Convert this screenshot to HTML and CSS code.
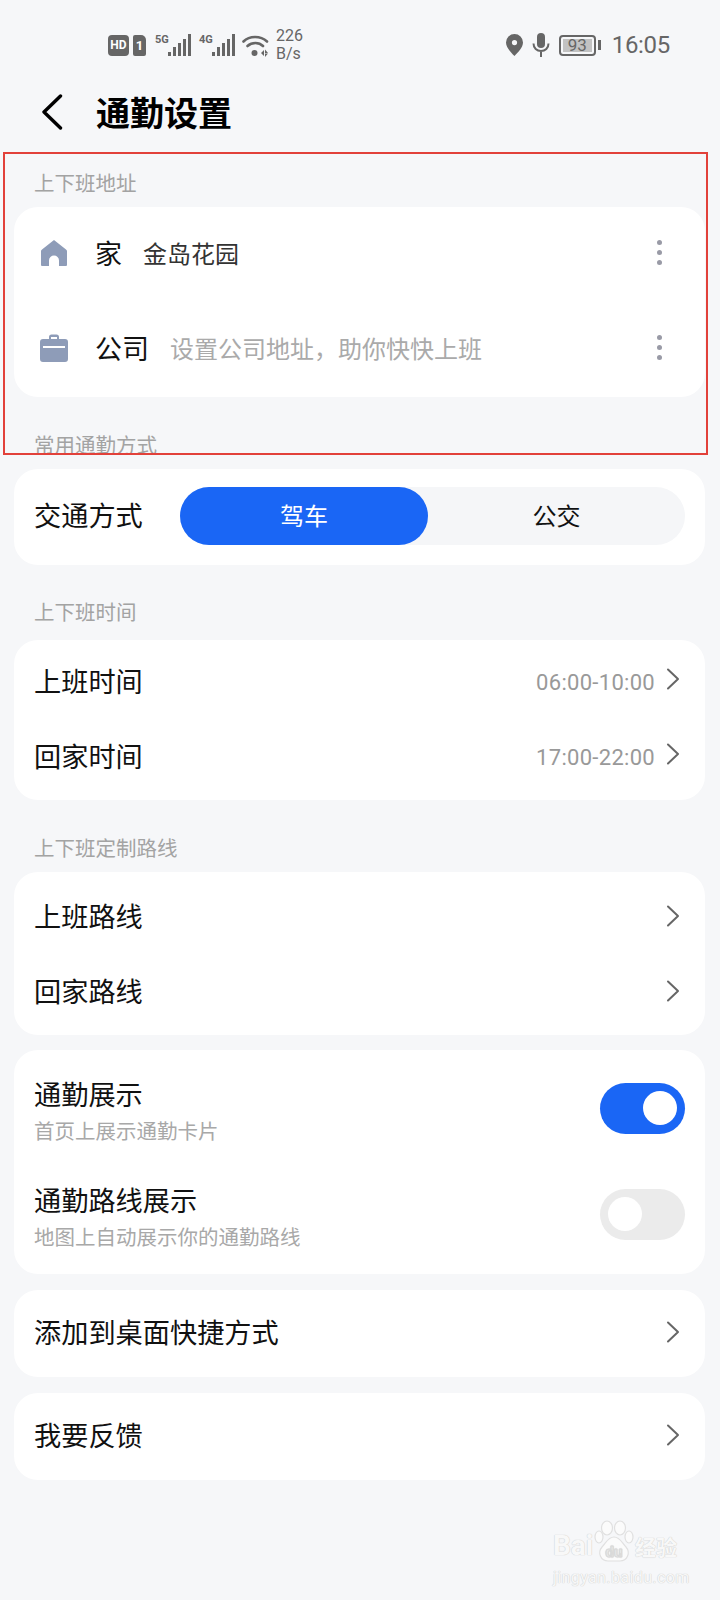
FILE: index.html
```html
<!DOCTYPE html>
<html>
<head>
    <meta charset="utf-8">
    <link rel="stylesheet" href="styles.css">
    <title>通勤设置</title>
</head>
<body>
    <div class="status-bar">
        <div class="status-left">
            <span class="hd-badge">HD</span>
            <span class="sim-badge">1</span>
            <span class="signal">
                <span class="signal-type">5G</span>
                <svg width="24" height="22" viewBox="0 0 24 22"><g fill="#666"><rect x="1" y="18" width="3" height="4"/><rect x="6" y="13" width="3" height="9"/><rect x="11" y="9" width="3" height="13"/><rect x="16" y="5" width="3" height="17"/><rect x="21" y="0" width="3" height="22"/></g></svg>
            </span>
            <span class="signal">
                <span class="signal-type">4G</span>
                <svg width="24" height="22" viewBox="0 0 24 22"><g fill="#666"><rect x="1" y="18" width="3" height="4"/><rect x="6" y="13" width="3" height="9"/><rect x="11" y="9" width="3" height="13"/><rect x="16" y="5" width="3" height="17"/><rect x="21" y="0" width="3" height="22"/></g></svg>
            </span>
            <svg class="wifi" width="27" height="23" viewBox="0 0 27 23"><g fill="none" stroke="#666" stroke-width="2.6" stroke-linecap="round"><path d="M1.5 7.5C7.5 1.5 18.5 1.5 25 7.5"/><path d="M5.5 12C10 8 17 8 21 12"/></g><circle cx="12.5" cy="19" r="3" fill="#666"/><path d="M19 19l3-3v6zM23 15.500l3 3.500h-3zM23 19.500h3l-3 3.500z" fill="#666"/></svg>
            <span class="net-speed">226<br>B/s</span>
        </div>
        <div class="status-right">
            <svg width="17" height="22" viewBox="0 0 17 22"><path fill-rule="evenodd" d="M8.500 0a8.500 8.500 0 0 1 8.500 8.500c0 5-5 10-8.500 13.500C5 18.500 0 13.500 0 8.500A8.500 8.500 0 0 1 8.500 0zm0 6a2.600 2.600 0 1 0 0 5.200 2.600 2.600 0 0 0 0-5.200z" fill="#666"/></svg>
            <svg width="18" height="24" viewBox="0 0 18 24"><rect x="5" y="0" width="8" height="15" rx="4" fill="#666"/><path d="M1.500 10.500c0 4.500 3.300 7.500 7.500 7.500s7.500-3 7.500-7.500M9 18v6" fill="none" stroke="#666" stroke-width="2"/></svg>
            <span class="battery"><span class="battery-level">93</span></span>
            <span class="battery-nub"></span>
            <span class="clock">16:05</span>
        </div>
    </div>

    <div class="header">
        <svg class="back" width="22" height="36" viewBox="0 0 22 36"><path d="M19.500 2L3 18l16.500 16" fill="none" stroke="#000" stroke-width="3.400" stroke-linecap="round" stroke-linejoin="round"/></svg>
        <h1>通勤设置</h1>
    </div>

    <div class="section section-first">
        <div class="section-label">上下班地址</div>
        <div class="card card-address">
            <div class="address-row">
                <svg class="address-icon" width="28" height="28" viewBox="0 0 28 28"><path fill-rule="evenodd" d="M14 1l12 9.500c.6.500 1 1 1 2V26a1 1 0 0 1-1 1h-7v-5.500a5 5 0 0 0-10 0V27H2a1 1 0 0 1-1-1V12.500c0-1 .4-1.500 1-2z" fill="#8e9cb8"/></svg>
                <span class="address-name">家</span>
                <span class="address-value">金岛花园</span>
                <span class="dots"><i></i><i></i><i></i></span>
            </div>
            <div class="address-row">
                <svg class="address-icon" width="28" height="28" viewBox="0 0 28 28"><path fill-rule="evenodd" d="M9 5V3a2.500 2.500 0 0 1 2.500-2.500h5A2.500 2.500 0 0 1 19 3v2h6a3 3 0 0 1 3 3v17a3 3 0 0 1-3 3H3a3 3 0 0 1-3-3V8a3 3 0 0 1 3-3zm2 0h6V3h-6zM3 12v2h22v-2z" fill="#8e9cb8"/></svg>
                <span class="address-name">公司</span>
                <span class="address-hint">设置公司地址，助你快快上班</span>
                <span class="dots"><i></i><i></i><i></i></span>
            </div>
        </div>
    </div>

    <div class="section">
        <div class="section-label section-label-cut">常用通勤方式</div>
        <div class="card card-traffic">
            <span class="row-title">交通方式</span>
            <div class="segment">
                <span class="segment-item segment-active">驾车</span>
                <span class="segment-item">公交</span>
            </div>
        </div>
    </div>

    <div class="section section-time">
        <div class="section-label">上下班时间</div>
        <div class="card card-list">
            <div class="row">
                <span class="row-title">上班时间</span>
                <span class="row-value">06:00-10:00</span>
                <svg class="chevron" width="14" height="22" viewBox="0 0 14 22"><path d="M2 1.500L12 11 2 20.500" fill="none" stroke="#666" stroke-width="2" stroke-linecap="round" stroke-linejoin="round"/></svg>
            </div>
            <div class="row">
                <span class="row-title">回家时间</span>
                <span class="row-value">17:00-22:00</span>
                <svg class="chevron" width="14" height="22" viewBox="0 0 14 22"><path d="M2 1.500L12 11 2 20.500" fill="none" stroke="#666" stroke-width="2" stroke-linecap="round" stroke-linejoin="round"/></svg>
            </div>
        </div>
    </div>

    <div class="section">
        <div class="section-label">上下班定制路线</div>
        <div class="card card-list card-routes">
            <div class="row">
                <span class="row-title">上班路线</span>
                <svg class="chevron" width="14" height="22" viewBox="0 0 14 22"><path d="M2 1.500L12 11 2 20.500" fill="none" stroke="#666" stroke-width="2" stroke-linecap="round" stroke-linejoin="round"/></svg>
            </div>
            <div class="row">
                <span class="row-title">回家路线</span>
                <svg class="chevron" width="14" height="22" viewBox="0 0 14 22"><path d="M2 1.500L12 11 2 20.500" fill="none" stroke="#666" stroke-width="2" stroke-linecap="round" stroke-linejoin="round"/></svg>
            </div>
        </div>
    </div>

    <div class="card card-toggles">
        <div class="toggle-row">
            <div class="toggle-text">
                <span class="row-title">通勤展示</span>
                <span class="row-sub">首页上展示通勤卡片</span>
            </div>
            <span class="toggle toggle-on"><i></i></span>
        </div>
        <div class="toggle-row">
            <div class="toggle-text">
                <span class="row-title">通勤路线展示</span>
                <span class="row-sub">地图上自动展示你的通勤路线</span>
            </div>
            <span class="toggle"><i></i></span>
        </div>
    </div>

    <div class="card card-single">
        <div class="row row-single">
            <span class="row-title">添加到桌面快捷方式</span>
            <svg class="chevron" width="14" height="22" viewBox="0 0 14 22"><path d="M2 1.500L12 11 2 20.500" fill="none" stroke="#666" stroke-width="2" stroke-linecap="round" stroke-linejoin="round"/></svg>
        </div>
    </div>

    <div class="card card-single">
        <div class="row row-single">
            <span class="row-title">我要反馈</span>
            <svg class="chevron" width="14" height="22" viewBox="0 0 14 22"><path d="M2 1.500L12 11 2 20.500" fill="none" stroke="#666" stroke-width="2" stroke-linecap="round" stroke-linejoin="round"/></svg>
        </div>
    </div>

    <div class="red-frame"></div>

    <div class="watermark">
        <div class="watermark-top">
            <span class="watermark-bai">Bai</span>
            <svg class="watermark-paw" width="40" height="42" viewBox="0 0 40 42"><g fill="#fbfbfb" stroke="#e0e0e0" stroke-width="1.200"><ellipse cx="13" cy="8" rx="5.500" ry="7"/><ellipse cx="26" cy="8" rx="5.500" ry="7"/><ellipse cx="5" cy="17" rx="4" ry="6"/><ellipse cx="35" cy="17" rx="4" ry="6"/><path d="M20 17c6 0 8 6 12 10 5 6 1 14-6 14H14c-7 0-11-8-6-14 4-4 6-10 12-10z"/></g><text x="20" y="37" text-anchor="middle" font-size="15" font-weight="bold" font-family="Roboto" fill="#f4f4f4" stroke="#dcdcdc" stroke-width="0.500">du</text></svg>
            <span class="watermark-cn">经验</span>
        </div>
        <div class="watermark-url">jingyan.baidu.com</div>
    </div>
</body>
</html>
```

FILE: styles.css
```css
html, body {
    margin: 0;
    padding: 0;
}

body {
    position: relative;
    width: 720px;
    height: 1600px;
    overflow: hidden;
    background-color: #f6f7f9;
    color: #111;
    font-family: Roboto, "Noto Sans CJK SC", sans-serif;
}

.status-bar {
    display: flex;
    justify-content: space-between;
    align-items: center;
    box-sizing: border-box;
    height: 86px;
    padding: 4px 50px 0 108px;
    color: #666;
}

.status-left, .status-right {
    display: flex;
    align-items: center;
}

.hd-badge {
    width: 21px;
    height: 21px;
    border-radius: 4px;
    background-color: #666;
    color: #fff;
    font-size: 12px;
    font-weight: bold;
    line-height: 21px;
    text-align: center;
}

.sim-badge {
    width: 13px;
    height: 21px;
    margin-left: 4px;
    border-radius: 2px 5px 2px 2px;
    background-color: #666;
    color: #fff;
    font-size: 13px;
    font-weight: bold;
    line-height: 21px;
    text-align: center;
}

.signal {
    display: flex;
    margin-left: 9px;
}

.signal + .signal {
    margin-left: 8px;
}

.signal-type {
    width: 12px;
    font-size: 11px;
    font-weight: bold;
    line-height: 11px;
}

.wifi {
    margin-left: 7px;
}

.net-speed {
    margin-left: 7px;
    font-size: 16px;
    line-height: 18px;
}

.status-right svg + svg {
    margin-left: 9px;
}

.battery {
    display: flex;
    align-items: center;
    box-sizing: border-box;
    width: 37px;
    height: 21px;
    margin-left: 9px;
    padding: 2px;
    border: 2px solid #666;
    border-radius: 4px;
}

.battery-level {
    width: 100%;
    height: 100%;
    background-color: #c2c2c2;
    font-size: 17px;
    line-height: 13px;
    text-align: center;
}

.battery-nub {
    width: 3px;
    height: 10px;
    margin-left: 2px;
    background-color: #666;
}

.clock {
    margin-left: 11px;
    font-size: 24px;
    letter-spacing: -0.3px;
}

.header {
    display: flex;
    align-items: center;
    height: 52px;
    padding-left: 41px;
}

.header h1 {
    margin: -2px 0 0 33px;
    color: #000;
    font-size: 34px;
    font-weight: bold;
}

.section {
    margin-top: 24px;
}

.section-first {
    margin-top: 21px;
}

.section-time {
    margin-top: 27px;
}

.section-time .section-label {
    padding-bottom: 10px;
}

.section-label {
    display: flex;
    align-items: center;
    box-sizing: border-box;
    height: 48px;
    padding: 0 0 2px 34px;
    color: #a3a3a3;
    font-size: 20.500px;
}

.section-label-cut {
    align-items: flex-start;
    height: 33px;
    margin-bottom: 15px;
    padding: 11px 0 0 34px;
    line-height: 28px;
    overflow: hidden;
}

.card {
    margin: 0 15px 0 14px;
    border-radius: 24px;
    background-color: #fff;
}

.card-address {
    height: 190px;
}

.address-row {
    display: flex;
    align-items: center;
    box-sizing: border-box;
    height: 95px;
    padding: 0 20px 4px 26px;
}

.address-name {
    margin-left: 27px;
    color: #111;
    font-size: 27px;
}

.address-value {
    margin-left: 21px;
    color: #333;
    font-size: 24px;
}

.address-hint {
    margin-left: 21px;
    color: #aaa;
    font-size: 24px;
}

.dots {
    display: flex;
    flex-direction: column;
    gap: 5.300px;
    margin-left: auto;
    margin-right: 23px;
}

.dots i {
    width: 5px;
    height: 5px;
    border-radius: 50%;
    background-color: #999aa6;
}

.card-traffic {
    display: flex;
    justify-content: space-between;
    align-items: center;
    height: 96px;
    padding: 0 20px;
}

.segment {
    display: flex;
    width: 505px;
    height: 58px;
    margin-top: -2px;
    border-radius: 29px;
    background-color: #f5f6f8;
}

.segment-item {
    width: 248px;
    border-radius: 29px;
    font-size: 24px;
    line-height: 60px;
    text-align: center;
}

.segment-item + .segment-item {
    width: 257px;
}

.segment-active {
    background-color: #1a66f5;
    color: #fff;
}

.card-list {
    padding: 5px 0;
}

.card-routes {
    padding: 8px 0 5px;
}

.row {
    display: flex;
    align-items: center;
    height: 75px;
    padding: 0 25px 0 20px;
}

.row-single {
    height: 87px;
}

.row-title {
    color: #111;
    font-size: 27.200px;
    line-height: 34px;
}

.row-value {
    margin-left: auto;
    color: #999;
    font-size: 22px;
    letter-spacing: 0.300px;
}

.chevron {
    margin-left: 11px;
    margin-top: -4px;
}

.row-value + .chevron {
    margin-top: -8px;
}

.row-title + .chevron {
    margin-left: auto;
}

.card-toggles {
    display: flex;
    flex-direction: column;
    gap: 14px;
    box-sizing: border-box;
    height: 224px;
    margin-top: 15px;
    padding-top: 12px;
}

.toggle-row {
    display: flex;
    justify-content: space-between;
    align-items: center;
    height: 92px;
    padding: 0 20px;
}

.toggle-text {
    display: flex;
    flex-direction: column;
    gap: 6px;
    padding-top: 8px;
}

.row-sub {
    color: #a8a8a8;
    font-size: 20.500px;
    line-height: 26px;
}

.toggle {
    display: flex;
    align-items: center;
    width: 85px;
    height: 51px;
    padding: 0 8px;
    box-sizing: border-box;
    border-radius: 26px;
    background-color: #ebebeb;
}

.toggle i {
    width: 34px;
    height: 34px;
    border-radius: 50%;
    background-color: #fff;
}

.toggle-on {
    justify-content: flex-end;
    background-color: #1a66f5;
}

.card-single {
    margin-top: 16px;
}

.red-frame {
    position: absolute;
    top: 152px;
    left: 3px;
    box-sizing: border-box;
    width: 705px;
    height: 303px;
    border: 2px solid #e2413a;
    pointer-events: none;
}

.watermark {
    position: absolute;
    top: 1520px;
    left: 553px;
    width: 130px;
    color: #f8f8f8;
    text-shadow: 0 0 1px #cfcfcf, 0 0 1px #cfcfcf;
}

.watermark-top {
    display: flex;
    align-items: flex-end;
    height: 42px;
}

.watermark-bai {
    width: 41px;
    font-size: 28px;
    font-weight: bold;
    line-height: 32px;
}

.watermark-paw {
    flex: none;
}

.watermark-cn {
    margin-left: 1px;
    font-size: 21px;
    font-weight: bold;
    line-height: 28px;
}

.watermark-url {
    margin-top: 6px;
    font-size: 16px;
    line-height: 20px;
    letter-spacing: 0.400px;
    white-space: nowrap;
}
```
